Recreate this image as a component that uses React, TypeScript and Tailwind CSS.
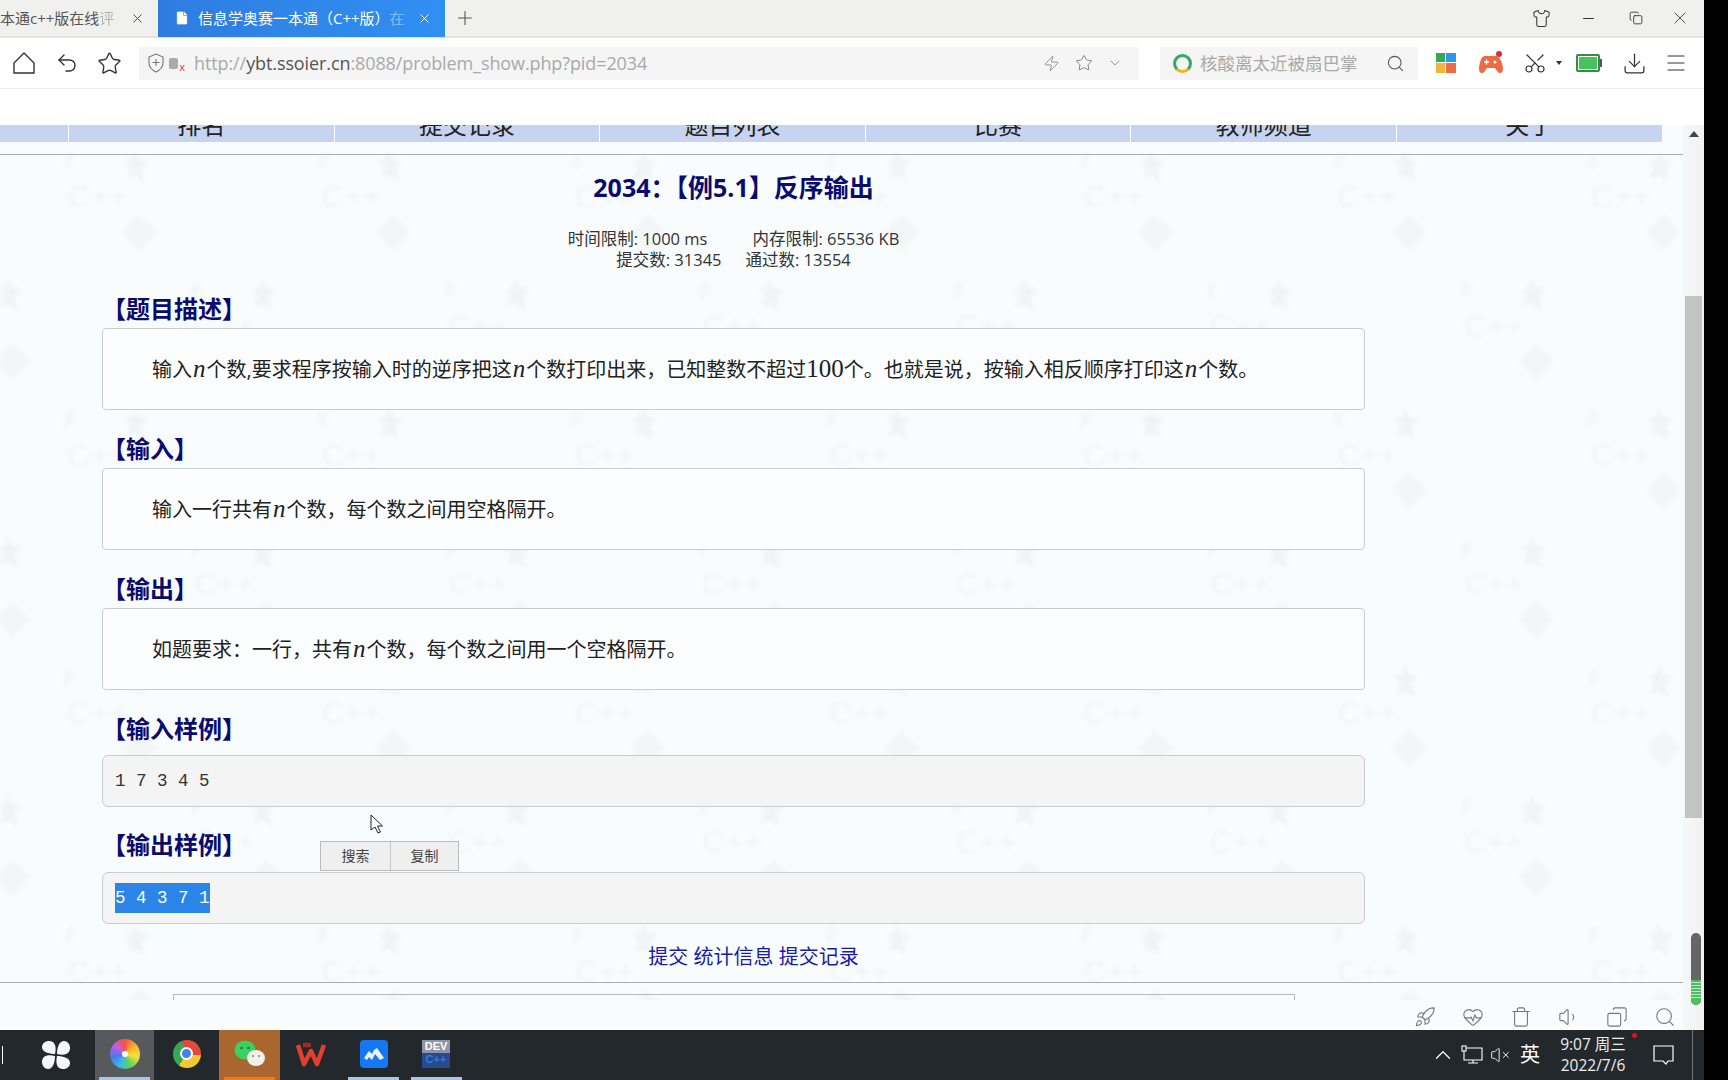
import {
  ChevronDown,
  ChevronUp,
  Copy,
  Download,
  File,
  HeartPulse,
  Menu,
  Minus,
  Plus,
  Rocket,
  Scissors,
  Search,
  Shirt,
  Star,
  Trash,
  Undo2,
  Volume1,
  VolumeX,
  X,
  Zap,
} from "lucide-react";
import type { ReactNode } from "react";

const navItems = ["排名", "提交记录", "题目列表", "比赛", "教师频道", "关于"];

const Watermark = () => (
  <svg className="absolute inset-0 h-full w-full blur-[2px]" aria-hidden="true">
    <defs>
      <g id="wm-mark" fill="#000000">
        <text x="30" y="82" fontSize="32" fontFamily="Liberation Sans" fill="#000000">
          C++
        </text>
        <path d="M97 22l5 11 10 1-7 8 3 14-10-7-9 4 4-12-6-7 8-1z" />
        <path d="M28 28l10-2-3 14-8 6z" opacity="0.6" />
        <path d="M102 88l18 18-18 20-17-20z" opacity="0.7" />
      </g>
      <pattern id="wm" x="164" y="113" width="254" height="258" patternUnits="userSpaceOnUse">
        <use href="#wm-mark" />
        <use href="#wm-mark" x="127" y="129" />
        <use href="#wm-mark" x="-127" y="129" />
        <use href="#wm-mark" x="127" y="-129" />
        <use href="#wm-mark" x="-127" y="-129" />
      </pattern>
    </defs>
    <rect width="100%" height="100%" fill="url(#wm)" opacity="0.032" />
  </svg>
);

const Var = () => (
  <span className="font-['Liberation_Serif'] text-[25px] leading-none italic mx-px">n</span>
);

const Heading = ({ children, mb = "mb-[2px]" }: { children: ReactNode; mb?: string }) => (
  <h3 className={`h-[34px] text-[24px] leading-[34px] font-bold text-[#0b0b6f] ${mb}`}>
    {children}
  </h3>
);

const Card = ({ children }: { children: ReactNode }) => (
  <div className="flex h-[82px] items-center rounded-[4px] border border-[#c9cdcf] bg-[#fcfdfe] pt-[1px] pl-[49px] text-[20px] text-[#222]">
    <p>{children}</p>
  </div>
);

const Sample = ({ children }: { children: ReactNode }) => (
  <div className="flex h-[52px] items-center rounded-[6px] border border-[#c9cdcf] bg-[#f4f4f4] pl-[12px] font-['Liberation_Mono'] text-[17.5px] whitespace-pre text-[#333]">
    {children}
  </div>
);

const TabBar = () => (
  <div className="flex h-[38px] shrink-0 items-center border-b-2 border-[#e2e3e1] bg-[#f0f1ef] text-[15px]">
    <div className="flex h-full w-[158px] items-center text-[#555]">
      <span className="w-[118px] whitespace-nowrap">
        本通c++版在线<span className="opacity-40">评</span>
      </span>
      <X size={15} strokeWidth={1.5} className="ml-[12px] text-[#444]" />
    </div>
    <div className="flex h-[38px] w-[287px] items-center bg-gradient-to-r from-[#2f7ce0] to-[#2f90f2] pl-[16px] text-white">
      <File size={16} fill="white" strokeWidth={1} className="mr-[8px] text-[#2f7ce0]" />
      <span className="w-[207px] whitespace-nowrap">
        信息学奥赛一本通（C++版）<span className="opacity-40">在</span>
      </span>
      <X size={15} strokeWidth={1.5} className="ml-[12px]" />
    </div>
    <Plus size={22} strokeWidth={1.2} className="ml-[9px] text-[#555]" />
    <div className="ml-auto flex items-center pr-[14px] text-[#333]">
      <Shirt size={19} strokeWidth={1.3} />
      <Minus size={17} strokeWidth={1.5} className="ml-[29px]" />
      <Copy size={14} strokeWidth={1.5} className="ml-[32px]" />
      <X size={20} strokeWidth={1} className="ml-[27px]" />
    </div>
  </div>
);

const Toolbar = () => (
  <div className="flex h-[51px] shrink-0 items-center border-b border-[#ececec] bg-white text-[#333]">
    <svg width="24" height="24" viewBox="0 0 24 24" fill="none" stroke="currentColor" strokeWidth="1.4" className="ml-[12px]">
      <path d="M12 2 2 12v10h20V12z" />
    </svg>
    <Undo2 size={24} strokeWidth={1.4} className="ml-[19px]" />
    <Star size={25} strokeWidth={1.3} className="ml-[18px]" />
    <div className="ml-[17px] flex h-[33px] w-[1000px] items-center bg-[#f4f5f4] pl-[9px]">
      <svg width="16" height="20" viewBox="0 0 16 20" fill="none" stroke="#777" strokeWidth="1.1">
        <path d="M8 1 1 4v6c0 4 3 7 7 9 4-2 7-5 7-9V4z" />
        <path d="M4.500 9.500h7M8 6v7" />
      </svg>
      <span className="relative mr-[9px] ml-[5px] h-[11px] w-[9px] rounded-[2px] bg-[#aaa]">
        <span className="absolute -right-[7px] -bottom-[3px] text-[11px] leading-none text-[#d33]">x</span>
      </span>
      <span className="ml-[7px] text-[18px] tracking-[-0.1px] text-[#a9a9a9]">
        http://<span className="text-[#555]">ybt.ssoier.cn</span>:8088/problem_show.php?pid=2034
      </span>
      <div className="ml-auto flex items-center pr-[16px] text-[#777]">
        <Zap size={17} strokeWidth={1.1} />
        <Star size={18} strokeWidth={1.2} className="ml-[15px]" />
        <ChevronDown size={16} strokeWidth={1.1} className="ml-[14px]" />
      </div>
    </div>
    <div className="ml-[21px] flex h-[33px] w-[258px] items-center bg-[#f4f5f4] pl-[13px]">
      <span className="h-[19px] w-[19px] rounded-full border-[3px] border-[#36a860] border-b-[#eeb722]" />
      <span className="ml-[8px] text-[17.5px] text-[#a9a9a9]">核酸离太近被扇巴掌</span>
      <Search size={19} strokeWidth={1.3} className="ml-[28px] text-[#555]" />
    </div>
    <svg width="20" height="20" viewBox="0 0 20 20" className="ml-[18px]">
      <rect x="0" y="0" width="9" height="9" fill="#34a853" />
      <rect x="10" y="0" width="10" height="9" fill="#2f96ee" />
      <rect x="0" y="10" width="9" height="10" fill="#f4b43a" />
      <rect x="10" y="10" width="10" height="10" fill="#ee6b43" />
    </svg>
    <svg width="26" height="26" viewBox="0 0 26 26" className="ml-[22px]">
      <path d="M7 6h11c4 0 7 8 7 13 0 5-4 5-6 2l-2-3H9l-2 3c-2 3-6 3-6-2C1 14 3 6 7 6z" fill="#ee6a45" />
      <circle cx="21" cy="4" r="3" fill="#d5303a" />
      <path d="M6 12h5M8.500 9.500v5" stroke="#fff" strokeWidth="1.4" />
      <circle cx="17" cy="12" r="1.500" fill="#fff" />
    </svg>
    <Scissors size={24} strokeWidth={1.2} className="ml-[19px] -rotate-90" />
    <span className="ml-[9px] h-0 w-0 border-x-[3px] border-t-[4px] border-x-transparent border-t-[#333]" />
    <span className="ml-[14px] flex h-[18px] w-[24px] items-center justify-center rounded-[2px] border-2 border-[#2f8f45]">
      <span className="h-[12px] w-[18px] bg-[#49c15f]" />
    </span>
    <span className="h-[8px] w-[2px] bg-[#555]" />
    <Download size={25} strokeWidth={1.2} className="ml-[20px]" />
    <Menu size={24} strokeWidth={1.2} className="ml-[17px]" />
  </div>
);

const NavStrip = () => (
  <div className="flex h-[17px] w-[1662px] shrink-0 overflow-hidden bg-[#c6d3f1] pl-[68px] text-[24px] leading-[24px] text-[#222]">
    {navItems.map((item) => (
      <div key={item} className="h-[17px] w-[265.6px] shrink-0 border-l border-white text-center">
        <span className="relative -top-[12px]">{item}</span>
      </div>
    ))}
  </div>
);

const Problem = () => (
  <div className="relative min-h-0 flex-1 overflow-hidden">
    <Watermark />
    <div className="relative flex h-full flex-col">
      <div className="mt-[12px] h-px shrink-0 bg-[#a9adad]" />
      <div className="ml-[102px] w-[1263px] shrink-0">
        <h1 className="mt-[16px] h-[32px] text-center text-[25px] leading-[32px] font-bold text-[#0b0b6f]">
          2034：【例5.1】反序输出
        </h1>
        <div className="mt-[25px] flex h-[21px] justify-center gap-[45px] text-[16.5px] leading-[21px] text-[#333]">
          <span>时间限制: 1000 ms</span>
          <span>内存限制: 65536 KB</span>
        </div>
        <div className="flex h-[21px] justify-center gap-[24px] text-[16.5px] leading-[21px] text-[#333]">
          <span>提交数: 31345</span>
          <span>通过数: 13554</span>
        </div>
        <div className="mt-[22px]">
          <Heading>【题目描述】</Heading>
          <Card>
            输入<Var />个数,要求程序按输入时的逆序把这<Var />个数打印出来，已知整数不超过
            <span className="font-['Liberation_Serif'] text-[25px] leading-none">100</span>
            个。也就是说，按输入相反顺序打印这<Var />个数。
          </Card>
        </div>
        <div className="mt-[22px]">
          <Heading>【输入】</Heading>
          <Card>
            输入一行共有<Var />个数，每个数之间用空格隔开。
          </Card>
        </div>
        <div className="mt-[22px]">
          <Heading>【输出】</Heading>
          <Card>
            如题要求：一行，共有<Var />个数，每个数之间用一个空格隔开。
          </Card>
        </div>
        <div className="mt-[22px]">
          <Heading mb="mb-[9px]">【输入样例】</Heading>
          <Sample>1 7 3 4 5</Sample>
        </div>
        <div className="mt-[21px]">
          <Heading mb="mb-[10px]">【输出样例】</Heading>
          <Sample>
            <span className="bg-[#2b85e8] py-[2px] text-white">5 4 3 7 1</span>
          </Sample>
        </div>
        <div className="mt-[19px] h-[28px] pl-[40px] text-center text-[20px] leading-[28px] text-[#1a1aa8]">
          提交 统计信息 提交记录
        </div>
      </div>
      <div className="mt-[11px] h-px shrink-0 bg-[#a9adad]" />
      <div className="mt-[11px] ml-[173px] h-[6px] w-[1122px] shrink-0 border-x border-t border-[#b5b9ba]" />
      <div className="flex-1 bg-gradient-to-b from-[#f8fbfc] to-[#fbfcfc]" />
    </div>

    {/* selection popup */}
    <div className="absolute top-[699px] left-[320px] flex h-[30px] w-[139px] border border-[#bbb] bg-[#efefef] text-[14px] leading-[28px] text-[#444]">
      <span className="w-[70px] border-r border-[#c8c8c8] text-center">搜索</span>
      <span className="flex-1 text-center">复制</span>
    </div>

    {/* mouse cursor */}
    <svg width="14" height="20" viewBox="0 0 14 20" className="absolute top-[672px] left-[370px]">
      <path d="M1 1v15l4-3 3 6 2.500-1-3-6h5z" fill="#fff" stroke="#222" strokeWidth="1" />
    </svg>

    {/* floating video icons */}
    <div className="absolute top-[864px] right-[7px] flex items-center gap-[26px] text-[#777]">
      <Rocket size={22} strokeWidth={1.2} />
      <HeartPulse size={22} strokeWidth={1.2} />
      <Trash size={22} strokeWidth={1.2} />
      <Volume1 size={22} strokeWidth={1.2} />
      <Copy size={22} strokeWidth={1.2} className="-scale-x-100" />
      <Search size={22} strokeWidth={1.2} />
    </div>
  </div>
);

const ScrollTrack = () => (
  <div className="flex w-[21px] shrink-0 flex-col bg-white">
    <div className="h-[36px] shrink-0" />
    <div className="flex flex-1 flex-col bg-gradient-to-r from-[#f5f8f8] to-[#f1f2f0]">
      <div className="flex h-[171px] justify-center pt-[6px]">
        <span className="h-0 w-0 border-x-[5px] border-b-[6px] border-x-transparent border-b-[#444]" />
      </div>
      <div className="ml-[2px] h-[522px] w-[17px] bg-[#c3c4c2]" />
      <div className="mt-[115px] ml-[8px] flex h-[72px] w-[10px] flex-col overflow-hidden rounded-full bg-[#666]">
        <div className="mt-[47px] flex flex-1 flex-col gap-[2px] bg-[#4cc060] py-[2px]">
          {[0, 1, 2, 3, 4, 5].map((i) => (
            <span key={i} className="h-px bg-[#bfe8c6]" />
          ))}
        </div>
      </div>
    </div>
  </div>
);

const TaskCell = ({
  width,
  bg = "",
  bar = "",
  children,
}: {
  width: string;
  bg?: string;
  bar?: string;
  children: ReactNode;
}) => (
  <div className={`flex h-full shrink-0 flex-col items-center ${width} ${bg}`}>
    <div className="flex flex-1 items-center justify-center">{children}</div>
    <div className={`h-[3px] w-[51px] ${bar}`} />
  </div>
);

const Taskbar = () => (
  <div className="relative flex h-[50px] shrink-0 items-center bg-[#23282c] text-white">
    <div className="flex h-full w-[95px] shrink-0 items-center">
      <span className="ml-[2px] h-[18px] w-px bg-white" />
      <svg width="30" height="30" viewBox="0 0 30 30" fill="#f4f7fb" className="ml-[38px]">
        <path d="M14 14C8 14 1 12 1 7c0-4 4-6 7-6 5 0 8 4 6 13z" />
        <path d="M16 14c0-6 2-13 7-13 4 0 6 4 6 7 0 5-4 8-13 6z" />
        <path d="M16 16c6 0 13 2 13 7 0 4-4 6-7 6-5 0-8-4-6-13z" />
        <path d="M14 16c0 6-2 13-7 13-4 0-6-4-6-7 0-5 4-8 13-6z" />
      </svg>
    </div>
    <TaskCell width="w-[59px]" bg="bg-[#565a5d]" bar="bg-[#a9c6ea]">
      <span className="flex h-[30px] w-[30px] items-center justify-center rounded-full bg-[conic-gradient(#f0553c,#f7b52c,#f5e23a,#5fd35a,#38b8e8,#4a78ee,#c35be8,#f0553c)]">
        <span className="h-[6px] w-[6px] rounded-full bg-white" />
      </span>
    </TaskCell>
    <TaskCell width="w-[65px]">
      <span className="flex h-[28px] w-[28px] items-center justify-center rounded-full bg-[conic-gradient(#e5483c_0deg,#e5483c_95deg,#f5c730_95deg,#f5c730_215deg,#35a853_215deg,#35a853_335deg,#e5483c_335deg)]">
        <span className="h-[13px] w-[13px] rounded-full border-2 border-white bg-[#3f83ea]" />
      </span>
    </TaskCell>
    <TaskCell width="w-[61px]" bg="bg-[#a9672f]" bar="bg-[#f07c10]">
      <svg width="32" height="28" viewBox="0 0 32 28">
        <ellipse cx="11" cy="10" rx="10.500" ry="9.500" fill="#3ccf62" />
        <circle cx="7.500" cy="8" r="1.300" fill="#1d7f38" />
        <circle cx="14.500" cy="8" r="1.300" fill="#1d7f38" />
        <ellipse cx="22" cy="18" rx="9" ry="8" fill="#f1f1ec" />
        <circle cx="19" cy="16" r="1.100" fill="#8a8a84" />
        <circle cx="25" cy="16" r="1.100" fill="#8a8a84" />
      </svg>
    </TaskCell>
    <TaskCell width="w-[62px]">
      <svg width="32" height="26" viewBox="0 0 32 26" fill="none" stroke="#e2402b" strokeWidth="4.500" strokeLinejoin="round">
        <path d="M3 4l6 19 7-13 6 13 7-19" />
        <path d="M8 4h8" stroke="#a82a1c" />
      </svg>
    </TaskCell>
    <TaskCell width="w-[63px]" bar="bg-[#a9c6ea]">
      <span className="flex h-[28px] w-[28px] items-center justify-center rounded-[4px] bg-[#1677f2]">
        <svg width="20" height="12" viewBox="0 0 20 12" fill="#eaf3ff">
          <path d="M0 10 5 3l3 3 2-4 3-2 7 10-4 2-5-6-3 6-3-3-2 3z" />
        </svg>
      </span>
    </TaskCell>
    <TaskCell width="w-[62px]" bar="bg-[#a9c6ea]">
      <span className="flex h-[28px] w-[28px] flex-col items-center overflow-hidden bg-[#2a4a8c] font-['Liberation_Sans'] text-[11px] leading-[13px] font-bold">
        <span className="w-full bg-[#8f95a8] text-center">DEV</span>
        <span className="text-[#2d7fe0]">C++</span>
      </span>
    </TaskCell>

    <div className="ml-auto flex h-full items-center pr-[6px]">
      <ChevronUp size={26} strokeWidth={1.1} />
      <svg width="22" height="20" viewBox="0 0 22 20" fill="none" stroke="white" strokeWidth="1.1" className="ml-[5px]">
        <path d="M3 3h18v12H3zM12 15v3M7 18h10" />
        <rect x="1" y="1" width="4" height="5" fill="#23282c" />
      </svg>
      <VolumeX size={20} strokeWidth={1.1} className="ml-[7px]" />
      <span className="ml-[10px] text-[20px] leading-none">英</span>
      <div className="ml-[18px] w-[70px] text-center text-[15.5px] leading-[21px] text-[#eee]">
        <div className="whitespace-nowrap">9:07 周三</div>
        <div>2022/7/6</div>
      </div>
      <svg width="22" height="22" viewBox="0 0 22 22" fill="none" stroke="white" strokeWidth="1.2" className="ml-[24px]">
        <path d="M2 2h19v15h-5l-2 3-3-3H2z" />
      </svg>
      <span className="ml-[18px] h-[50px] w-px bg-[#70757a]" />
      <span className="w-[5px]" />
    </div>
    <span className="absolute top-[3px] left-[1632px] h-[5px] w-[5px] rounded-full bg-[#e01020]" />
  </div>
);

export default function App() {
  return (
    <div className="flex h-[1080px] w-[1728px] overflow-hidden bg-black font-['Open_Sans','Noto_Sans_CJK_SC',sans-serif]">
      <div className="flex w-[1704px] shrink-0 flex-col">
        <TabBar />
        <Toolbar />
        <div className="flex min-h-0 flex-1">
          <div className="flex w-[1683px] shrink-0 flex-col bg-[#f8fcfd]">
            <div className="h-[36px] shrink-0 bg-white" />
            <NavStrip />
            <Problem />
          </div>
          <ScrollTrack />
        </div>
        <Taskbar />
      </div>
    </div>
  );
}
